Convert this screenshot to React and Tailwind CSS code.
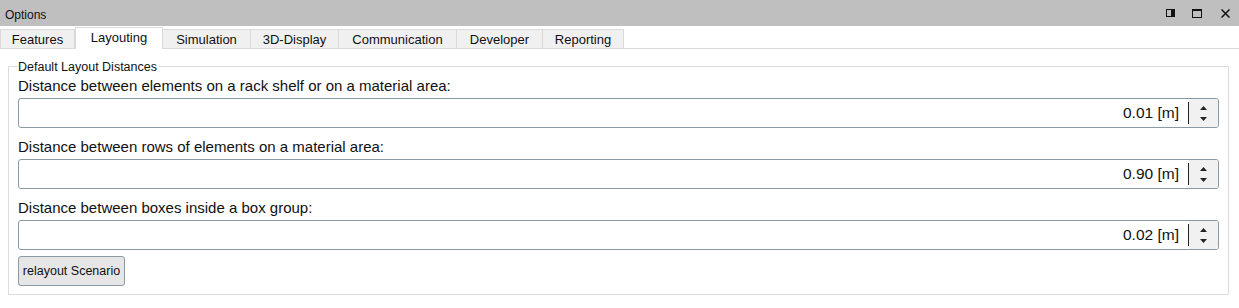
import React from "react";

const tabs = [
  { name: "Features", w: 75 },
  { name: "Layouting", w: 88, active: true },
  { name: "Simulation", w: 88 },
  { name: "3D-Display", w: 88 },
  { name: "Communication", w: 118 },
  { name: "Developer", w: 86 },
  { name: "Reporting", w: 81 },
];

const rows = [
  { label: "Distance between elements on a rack shelf or on a material area:", value: "0.01 [m]" },
  { label: "Distance between rows of elements on a material area:", value: "0.90 [m]" },
  { label: "Distance between boxes inside a box group:", value: "0.02 [m]" },
];

function Spin({ value }) {
  return (
    <div className="flex h-[30px] rounded-[3px] border border-[#8a99a6] bg-white">
      <div className="flex flex-1 items-center justify-end pr-[9px] text-[15.5px] text-[#111]">{value}</div>
      <div className="my-[3px] w-px bg-[#222]" />
      <div className="flex w-[29px] flex-col items-center justify-center gap-[7px] rounded-r-[2px] bg-[#f1f1f1]">
        <svg width="7" height="4" viewBox="0 0 7 4"><path d="M3.5 0 L7 4 L0 4 Z" fill="#222" /></svg>
        <svg width="7" height="4" viewBox="0 0 7 4"><path d="M0 0 L7 0 L3.5 4 Z" fill="#222" /></svg>
      </div>
    </div>
  );
}

export default function App() {
  return (
    <div className="relative h-[308px] w-[1239px] overflow-hidden bg-white text-[#111]" style={{ fontFamily: '"Liberation Sans", Arial, sans-serif' }}>
      <div className="flex h-[26px] items-center justify-between bg-[#bfbfbf] pl-[5px] pr-[9px] text-[12px]">
        <span className="pt-[3px]">Options</span>
        <div className="flex items-center">
          <svg width="9" height="8" viewBox="0 0 9 8"><rect x="0.5" y="0.5" width="8" height="7" fill="none" stroke="#111" /><rect x="5" y="1" width="3" height="6" fill="#111" /></svg>
          <svg className="ml-[17px]" width="10" height="9" viewBox="0 0 10 9"><rect x="0.5" y="0.5" width="9" height="8" fill="none" stroke="#111" /><rect x="0" y="0" width="10" height="2" fill="#111" /></svg>
          <svg className="ml-[19px]" width="9" height="9" viewBox="0 0 9 9"><path d="M0.5 0.5 L8.5 8.5 M8.5 0.5 L0.5 8.5" stroke="#111" strokeWidth="1.5" /></svg>
        </div>
      </div>
      <div className="relative flex h-[23px] items-end border-b border-[#dadada]">
        {tabs.map((t, i) =>
          t.active ? (
            <div key={t.name} style={{ width: t.w }} className="relative z-10 -mb-px flex h-[22px] items-center justify-center border-x border-t border-[#dadada] bg-white pb-[1px] text-[13px]">
              {t.name}
            </div>
          ) : (
            <div key={t.name} style={{ width: t.w }} className={`flex h-[19px] items-center justify-center border-r border-t border-[#d9d9d9] bg-[#f0f0f0] pt-[1px] text-[13px] ${i === 0 ? "border-l" : ""}`}>
              {t.name}
            </div>
          )
        )}
      </div>
      <div className="relative mx-[8px] mt-[17px] h-[229px] w-[1221px] border border-[#dcdcdc] px-[9px]">
        <div className="absolute left-[9px] top-[-7px] bg-white pr-[2px] text-[12.5px] leading-[14px]">Default Layout Distances</div>
        <div className="flex flex-col pt-[8px]">
          {rows.map((r, i) => (
            <div key={i} className="flex flex-col">
              <div className="h-[23px] text-[15px] leading-[22px]">{r.label}</div>
              <Spin value={r.value} />
              <div className="h-[8px]" />
            </div>
          ))}
          <button className="-mt-[2px] h-[30px] w-[107px] rounded-[3px] border border-[#8a99a6] bg-[#e6e6e6] text-[12.5px] text-[#111]">relayout Scenario</button>
        </div>
      </div>
    </div>
  );
}
